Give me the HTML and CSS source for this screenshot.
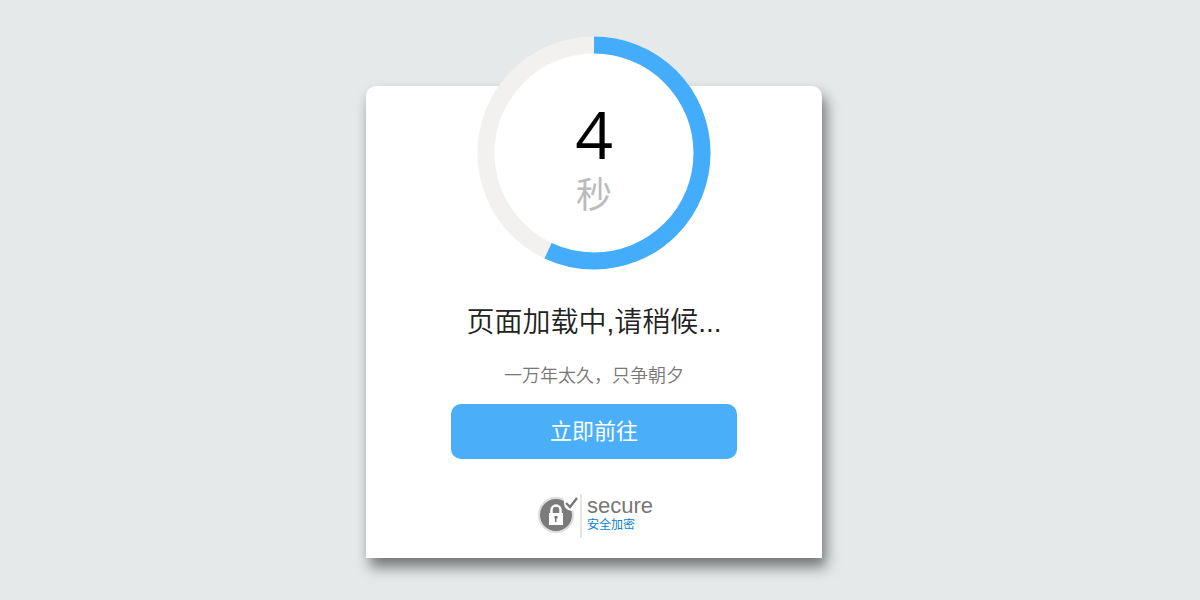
FILE: index.html
```html
<!DOCTYPE html>
<html lang="zh-CN">
  <head>
    <meta charset="UTF-8" />
    <meta name="viewport" content="width=device-width, initial-scale=1.0" />
    <title>页面加载中</title>
    <link rel="stylesheet" href="styles.css">
  </head>
  <body>
    <main class="card">
      <div class="timer">
        <svg class="ring" viewBox="0 0 234 234" aria-hidden="true">
          <circle class="ring-track" cx="117" cy="117" r="108" />
          <circle class="ring-bar" cx="117" cy="117" r="108" pathLength="100" transform="rotate(-90 117 117)" />
        </svg>
        <div class="timer-text">
          <span class="number">4</span>
          <span class="unit">秒</span>
        </div>
      </div>

      <h1 class="title">页面加载中,请稍候...</h1>
      <p class="subtitle">一万年太久，只争朝夕</p>
      <button type="button" class="go-button">立即前往</button>

      <div class="secure">
        <svg class="secure-icon" viewBox="0 0 42 42" aria-hidden="true">
          <circle cx="18" cy="20" r="17" fill="#7b7b7b" stroke="#dcdcdc" stroke-width="2" />
          <path d="M26 1h14v9l-6 6q-8-1-8-8z" fill="#fff" />
          <path d="M28 8l4 4 7-9" fill="none" stroke="#767676" stroke-width="2.4" />
          <path d="M13.500 19v-4a4.500 4.500 0 0 1 9 0v4" fill="none" stroke="#fff" stroke-width="2.4" />
          <rect x="11" y="18" width="14" height="12" fill="#fff" />
          <path d="M16.500 21h3v2.500h-1v3.500h-1.500v-3.500h-.5z" fill="#767676" />
        </svg>
        <div class="secure-text">
          <span class="secure-name">secure</span>
          <span class="secure-note">安全加密</span>
        </div>
      </div>
    </main>
  </body>
</html>
```
FILE: styles.css
```css
* {
  box-sizing: border-box;
}

body {
  margin: 0;
  padding: 86px 12px 42px 0;
  background-color: #e5e9ea;
  font-family: "Liberation Sans", "Noto Sans CJK SC", sans-serif;
}

.card {
  display: flex;
  flex-direction: column;
  align-items: center;
  width: 38.4%;
  min-width: 320px;
  margin: 0 auto;
  padding-bottom: 20px;
  background-color: #fff;
  border-radius: 10px 10px 0 0;
  box-shadow: 4px 9px 14px rgba(0, 0, 0, 0.5);
}

/* Countdown ring, overlaps the top edge of the card */
.timer {
  display: grid;
  place-items: center;
  width: 234px;
  margin-top: -50px;
  border-radius: 50%;
}

.ring,
.timer-text {
  grid-area: 1 / 1;
}

.ring {
  display: block;
  width: 100%;
}

.ring circle {
  fill: none;
  stroke-width: 17;
}

.ring .ring-track {
  fill: #fff;
  stroke: #f2f1f0;
}

.ring .ring-bar {
  stroke: #43adfb;
  stroke-dasharray: 57 43;
}

.timer-text {
  display: flex;
  flex-direction: column;
  align-items: center;
  padding-top: 10px;
}

.number {
  color: #000;
  font-family: "Open Sans", sans-serif;
  font-size: 66px;
  line-height: 76px;
}

.unit {
  color: #bbb;
  font-size: 36px;
  line-height: 50px;
}

.title {
  margin: 33px 0 0;
  color: #222;
  font-size: 28px;
  font-weight: 350;
  line-height: 40px;
}

.subtitle {
  margin: 20px 0 0;
  color: #777;
  font-size: 18px;
  font-weight: 350;
  line-height: 26px;
}

.go-button {
  width: 286px;
  height: 55px;
  margin-top: 15px;
  padding: 0 0 6px;
  border: none;
  border-radius: 10px;
  background-color: #4aaef9;
  color: #fff;
  font-family: inherit;
  font-size: 22px;
  cursor: pointer;
}

.secure {
  display: flex;
  align-items: center;
  margin-top: 35px;
  padding-left: 3px;
}

.secure-icon {
  width: 42px;
  height: 42px;
}

.secure-text {
  display: flex;
  flex-direction: column;
  height: 44px;
  padding-top: 1px;
  padding-left: 5px;
  border-left: 2px solid #e6e6e6;
}

.secure-name {
  color: #777;
  font-size: 22px;
  line-height: 22px;
}

.secure-note {
  color: #0a7fd9;
  font-size: 12px;
  line-height: 16px;
}
```
